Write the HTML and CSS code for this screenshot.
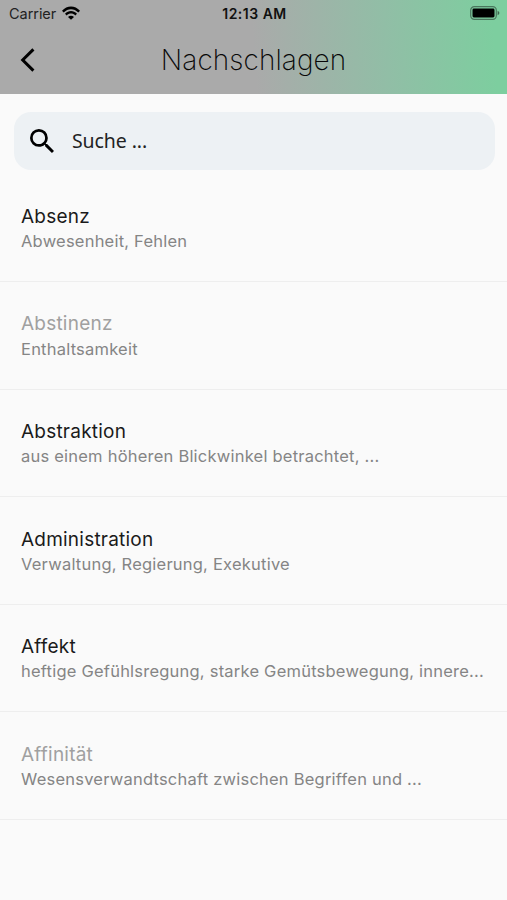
FILE: index.html
```html
<!DOCTYPE html>
<html lang="de">
<head>
<meta charset="utf-8">
<title>Nachschlagen</title>
<link rel="stylesheet" href="styles.css">
</head>
<body>
<header class="header">
  <div class="status">
    <div class="carrier"><span>Carrier</span>
      <svg class="wifi" viewBox="0 0 18 14"><path d="M0 4.8C5-.9 13-.9 18 4.8L16.3 6.5C12.2 2 5.8 2 1.7 6.5Z"/><path d="M3 7.8C6.5 4.1 11.5 4.1 15 7.8L13.3 9.5C10.8 6.9 7.2 6.9 4.7 9.5Z"/><path d="M6 10.9C7.8 9.2 10.2 9.2 12 10.9L9 13.8Z"/></svg>
    </div>
    <div class="time">12:13 AM</div>
    <svg class="battery" viewBox="0 0 30 14"><rect x=".7" y=".7" width="25.6" height="12.6" rx="3.6" fill="none" stroke="#000" stroke-opacity=".42" stroke-width="1.2"/><rect x="2.5" y="2.5" width="22" height="9" rx="1.4"/><path d="M27.6 4.7Q29.4 5.5 29.4 7T27.6 9.3Z" fill-opacity=".5"/></svg>
  </div>
  <div class="navbar">
    <svg class="back" viewBox="0 0 16 26"><path d="M13.4 2.4 2.7 13 13.4 23.6" fill="none" stroke="#000" stroke-width="3"/></svg>
    <h1 class="title">Nachschlagen</h1>
  </div>
</header>
<main>
  <div class="search">
    <svg class="search-icon" viewBox="3 3 17.5 17.5"><path d="M15.5 14h-.79l-.28-.27A6.47 6.47 0 0 0 16 9.5 6.5 6.5 0 1 0 9.5 16c1.61 0 3.09-.59 4.23-1.57l.27.28v.79l5 4.99L20.49 19l-4.99-5zm-6 0C7.01 14 5 11.99 5 9.5S7.01 5 9.5 5 14 7.01 14 9.5 11.99 14 9.5 14z"/></svg>
    <span class="placeholder">Suche ...</span>
  </div>
  <ul class="list">
    <li class="item"><h2 class="term">Absenz</h2><p class="meaning">Abwesenheit, Fehlen</p></li>
    <li class="item"><h2 class="term muted">Abstinenz</h2><p class="meaning">Enthaltsamkeit</p></li>
    <li class="item"><h2 class="term">Abstraktion</h2><p class="meaning">aus einem höheren Blickwinkel betrachtet, ...</p></li>
    <li class="item"><h2 class="term">Administration</h2><p class="meaning">Verwaltung, Regierung, Exekutive</p></li>
    <li class="item"><h2 class="term">Affekt</h2><p class="meaning">heftige Gefühlsregung, starke Gemütsbewegung, innere...</p></li>
    <li class="item"><h2 class="term muted">Affinität</h2><p class="meaning">Wesensverwandtschaft zwischen Begriffen und ...</p></li>
  </ul>
</main>
</body>
</html>
```
FILE: styles.css
```css
* { box-sizing: border-box; margin: 0; padding: 0; }
body {
  background: #fafafa;
  font-family: Inter, "Liberation Sans", sans-serif;
  color: #1a1a1a;
}
.header {
  height: 94px;
  background: linear-gradient(86deg, #aaa 0%, #aaa 50%, #91bea6 76%, #7dce9f 97%, #7dce9f 100%);
}
.status {
  height: 27px;
  display: grid;
  grid-template-columns: 1fr auto 1fr;
  align-items: center;
  padding: 0 7px 0 9px;
}
.carrier {
  display: flex;
  align-items: center;
  gap: 6px;
  font-size: 14.5px;
  letter-spacing: -.05px;
  color: #222;
}
.wifi { width: 18px; height: 14px; margin-top: -1px; }
.time { font-size: 14px; font-weight: 600; letter-spacing: .5px; color: #111; }
.battery { width: 30px; height: 14px; justify-self: end; margin-top: -1px; }
.navbar {
  height: 65px;
  display: grid;
  grid-template-columns: 56px 1fr 56px;
  align-items: center;
}
.back { width: 16px; height: 26px; margin-left: 20px; }
.title {
  text-align: center;
  font-size: 28px;
  line-height: 34px;
  font-weight: 250;
  letter-spacing: .08px;
  white-space: nowrap;
  color: #080808;
}
.search {
  margin: 18px 12px 0 14px;
  height: 58px;
  border-radius: 17px;
  background: #edf1f4;
  display: flex;
  align-items: center;
  gap: 18px;
  padding-left: 16px;
}
.search-icon { width: 24px; height: 24px; }
.placeholder { font: 19.5px/28px "Noto Sans", sans-serif; letter-spacing: -.1px; color: #222; }
.list { list-style: none; padding-top: 4.4px; }
.item {
  height: 107.6px;
  padding: 29.4px 20px 0 21px;
  border-bottom: 1px solid #eee;
}
.term { font-size: 19px; line-height: 26px; font-weight: 400; letter-spacing: .22px; color: #1a1a1a; }
.term.muted { color: #a0a0a0; }
.meaning { margin-top: -.7px; font-size: 16.5px; line-height: 24px; letter-spacing: .22px; color: #858585; white-space: nowrap; }
```
